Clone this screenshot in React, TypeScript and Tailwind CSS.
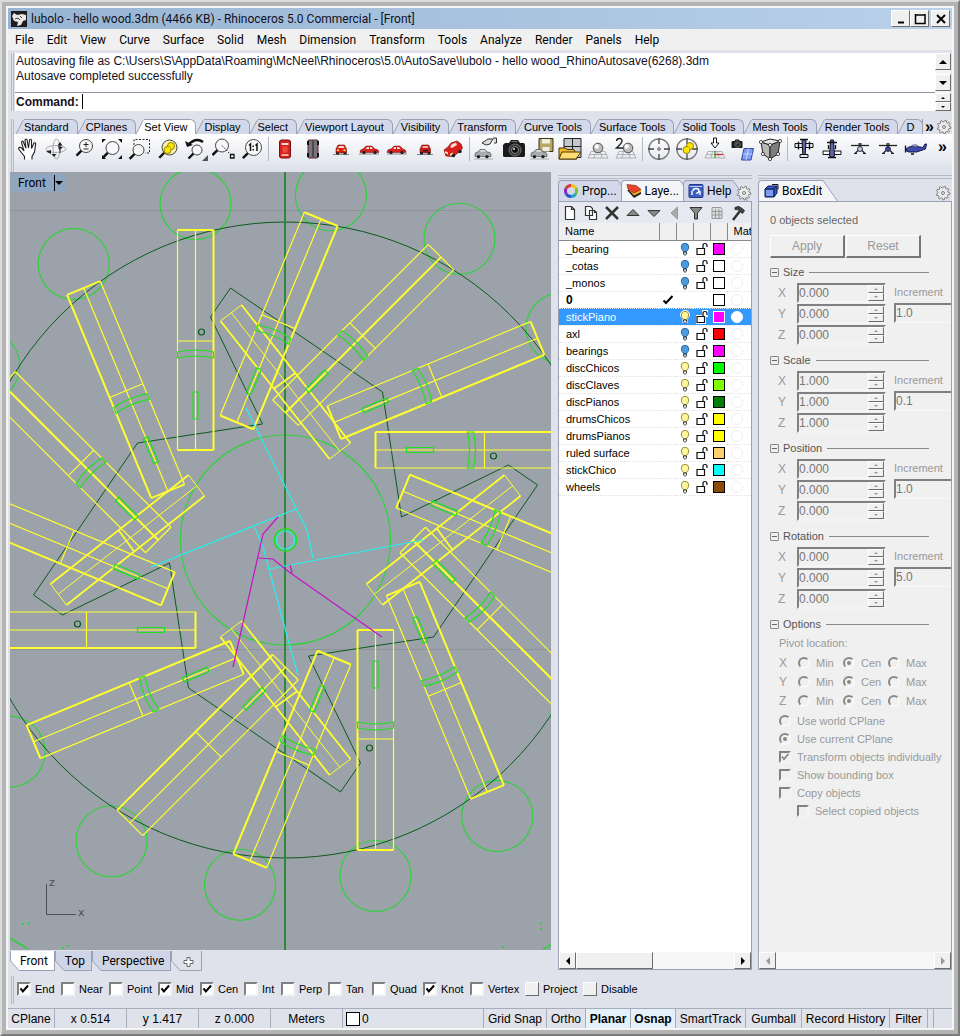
import React from 'react'
import clsx from 'clsx'

const sans = "font-['Liberation_Sans',Arial,sans-serif]"
const ui = "font-['Roboto','Noto_Sans',sans-serif]"

const raised = 'border border-t-white border-l-white border-r-[#6d6d6d] border-b-[#6d6d6d] bg-[#f0f0f0]'
const sunken = 'border-2 border-t-[#808080] border-l-[#808080] border-r-[#f4f4f4] border-b-[#f4f4f4]'

const menus = [
  'File', 'Edit', 'View', 'Curve', 'Surface', 'Solid', 'Mesh', 'Dimension',
  'Transform', 'Tools', 'Analyze', 'Render', 'Panels', 'Help',
]

const toolTabs = [
  'Standard', 'CPlanes', 'Set View', 'Display', 'Select', 'Viewport Layout', 'Visibility', 'Transform',
  'Curve Tools', 'Surface Tools', 'Solid Tools', 'Mesh Tools', 'Render Tools',
]

/* ---------- toolbar icons, all on a 24px grid ---------- */

const Lens = ({ cx, cy, r, fill = '#f8f8f8' }: { cx: number; cy: number; r: number; fill?: string }) => (
  <>
    <path d={`M${cx - r * 0.7} ${cy + r * 0.7}L${cx - r * 0.7 - 5} ${cy + r * 0.7 + 5}`} stroke="#111" strokeWidth="2.4" />
    <circle cx={cx} cy={cy} r={r} fill={fill} stroke="#444" strokeWidth="1" />
  </>
)

const YellowBalls = () => (
  <g fill="#ffe600" stroke="#776a00" strokeWidth=".8">
    <circle cx="15" cy="9" r="3.500" />
    <circle cx="11.500" cy="13" r="3.500" />
    <path d="M13 9.500l-1 3 3-.5z" stroke="none" />
  </g>
)

const CarSide = () => (
  <>
    <path d="M2 17h20" stroke="#888" />
    <path d="M3 15.500q-.5-3 3-3.500l3-3h6l3 3q4 0 4 3.500z" fill="#d8201c" stroke="#7a1010" strokeWidth=".5" />
    <path d="M8.500 12l1.500-2h2v2zM13 10h1.500l1.500 2h-3z" fill="#ffd9d0" />
    <circle cx="7" cy="15.500" r="1.700" fill="#222" />
    <circle cx="18" cy="15.500" r="1.700" fill="#222" />
  </>
)

const CarGrey = () => (
  <g transform="translate(0 1)">
    <path d="M1 16.500q0-2.500 3-2.500l2-2.500h5l2 2.500q4 0 4 2.500v2h-16z" fill="#a9aeae" stroke="#555" strokeWidth=".7" />
    <path d="M6 13.500l1-1.300h3.500l1 1.300z" fill="#f2f2f2" />
    <circle cx="4.500" cy="18.700" r="1.700" fill="#222" />
    <circle cx="13" cy="18.700" r="1.700" fill="#222" />
    <path d="M0 21h19" stroke="#aaa" />
  </g>
)

const Camera = ({ s = 1, x = 0, y = 0 }: { s?: number; x?: number; y?: number }) => (
  <g transform={`translate(${x} ${y}) scale(${s})`}>
    <path d="M1 8l2-2h4l2-3h7l2 3h4l1 2v11l-1 1H2l-1-1z" fill="#1b1b1b" />
    <path d="M9.500 4.500h6" stroke="#777" />
    <circle cx="13" cy="13" r="6" fill="#333" stroke="#888" strokeWidth=".8" />
    <circle cx="13" cy="13" r="3.500" fill="#0a0a0a" stroke="#aaa" strokeWidth=".8" />
    <circle cx="12" cy="12" r="1" fill="#eee" />
  </g>
)

const Mesh = () => (
  <g stroke="#9a9a9a" strokeWidth=".7" fill="none">
    <path d="M5 14.500h14M3.500 17.500h17M2 21h20M5 14.500L2 21M9.500 14.500l-1.500 6.500M14.500 14.500l1.500 6.500M19 14.500l3 6.500" />
  </g>
)

const Ball = ({ x, y }: { x: number; y: number }) => (
  <>
    <circle cx={x} cy={y} r="4.800" fill="#bcbcbc" stroke="#444" strokeWidth=".9" />
    <circle cx={x - 1.2} cy={y - 1.5} r="2.200" fill="#fff" />
  </>
)

const Target = () => (
  <g fill="none">
    <circle cx="12" cy="12" r="10.200" stroke="#777" strokeWidth="1.300" />
    <path d="M12 1v6M12 17v6M1 12h6M17 12h6" stroke="#444" strokeWidth="1.300" />
  </g>
)

const PlaneFar = ({ fill }: { fill: string }) => (
  <>
    <path d="M3 8.500h18" stroke="#222" strokeWidth="1.300" />
    <path d="M12 6v5M10 7h4M7 16.500l3-3M17 16.500l-3-3M6 16.500h3M15 16.500h3" stroke="#222" strokeWidth="1.200" />
    <circle cx="12" cy="12" r="2.400" fill={fill} stroke="#223" />
  </>
)

const tools: { label: string; art: React.ReactNode }[][] = [
  [
    {
      label: 'Pan',
      art: (
        <path
          d="M8.500 22.500v-3L3 12.500q-1-2 1-2.200 1.500.2 4 3.700L5.500 5.500q0-1.700 1.500-1.300l3 7L9 3q.8-1.800 2-.3l1.500 8.300L13.500 3q1-1.500 2 0v8.500L18 6q1.500-.8 1.700.7L18.500 15l-2.500 4.500v3"
          fill="#fff" stroke="#222" strokeWidth="1.100"
        />
      ),
    },
    {
      label: 'Rotate view',
      art: (
        <g fill="none" stroke="#aaa" strokeWidth="1">
          <ellipse cx="12" cy="12" rx="10" ry="3.500" />
          <ellipse cx="12.500" cy="12" rx="3.500" ry="10" />
          <path d="M16 5l-2.500 3.500h5zM10 20l2.500-3h-5z" fill="#222" stroke="none" />
          <path d="M2 14.500l5-1.500v4zM14 9l5 1.500-4 2.500z" fill="#222" stroke="none" />
          <path d="M16 8v8" stroke="#333" />
        </g>
      ),
    },
    {
      label: 'Zoom dynamic',
      art: (
        <>
          <Lens cx={14} cy={9} r={6.500} />
          <path d="M11.500 7.500h5M14 5v5M11.500 12h5" stroke="#222" />
        </>
      ),
    },
    {
      label: 'Zoom extents',
      art: (
        <>
          <Lens cx={12.500} cy={11} r={6.500} />
          <path d="M2 2h4l-4 4zM22 2h-4l4 4zM2 22h4l-4-4zM22 22h-4l4-4z" fill="#111" />
        </>
      ),
    },
    {
      label: 'Zoom window',
      art: (
        <>
          <path d="M6 8V2.500h15.500V16H17" fill="none" stroke="#222" strokeDasharray="2 1.500" />
          <Lens cx={10.500} cy={13} r={5.500} />
        </>
      ),
    },
    { label: 'Zoom selected', art: <><Lens cx={13.500} cy={10.500} r={7.500} fill="#f5f0b0" /><YellowBalls /></> },
    {
      label: 'Undo view change',
      art: (
        <>
          <path d="M4 8Q12 0 19 5" fill="none" stroke="#111" strokeWidth="2.500" />
          <path d="M1 4l2 6 6-2z" fill="#111" />
          <Lens cx={13} cy={13} r={5} />
          <path d="M24 18v6h-6z" fill="#555" />
        </>
      ),
    },
    {
      label: 'Zoom target',
      art: (
        <>
          <Lens cx={10} cy={8.500} r={6.500} />
          <path d="M10 8.500l8.500 9" stroke="#222" strokeDasharray="1.500 1.500" />
          <path d="M18.500 17.500h3.500v3.500h-3.500z" fill="#fff" stroke="#111" strokeWidth="1.300" />
        </>
      ),
    },
    {
      label: 'Zoom one to one',
      art: (
        <>
          <Lens cx={13.500} cy={10.500} r={8} />
          <path d="M9 8.500l1.500-1.500v7M15.500 8.500L17 7v7" fill="none" stroke="#111" strokeWidth="1.500" />
          <path d="M12.500 8.500h1.500v1.500h-1.500zM12.500 12h1.500v1.500h-1.500z" fill="#111" />
        </>
      ),
    },
  ],
  [
    {
      label: 'Top view',
      art: (
        <>
          <rect x="6.500" y="3" width="11" height="18" rx="2" fill="#d71f1f" stroke="#7a1010" />
          <path d="M8.500 6h7v2h-7z" fill="#ffd9d0" />
          <path d="M8.500 17h7v2h-7z" fill="#f6a9a0" />
          <path d="M9.500 9.500h5v6h-5z" fill="#ef4a42" />
        </>
      ),
    },
    {
      label: 'Bottom view',
      art: (
        <>
          <rect x="7" y="3" width="10" height="18" rx="1" fill="#77747c" stroke="#5d2626" />
          <path d="M12 4v16" stroke="#333" strokeWidth="1.300" />
          <path d="M7 4v4M17 4v4M7 16v4M17 16v4" stroke="#111" strokeWidth="2" />
        </>
      ),
    },
    {
      label: 'Front view',
      art: (
        <>
          <path d="M4 17.500h16" stroke="#888" />
          <path d="M7 16v-4l2-4h6.500l2 4v4z" fill="#d8201c" stroke="#7a1010" strokeWidth=".6" />
          <path d="M9 11l1-2h4.500l1 2z" fill="#ffd9d0" />
          <path d="M8 12.500h2v1.500H8zM14.500 12.500h2v1.500h-2z" fill="#ffe14a" />
          <path d="M7 15.500h3v2H7zM14.500 15.500h3v2h-3z" fill="#222" />
        </>
      ),
    },
    { label: 'Right view', art: <CarSide /> },
    { label: 'Left view', art: <g transform="translate(24 0) scale(-1 1)"><CarSide /></g> },
    {
      label: 'Back view',
      art: (
        <>
          <path d="M4 17.500h16" stroke="#888" />
          <path d="M7 16v-4l2-4h6.500l2 4v4z" fill="#c41a1a" stroke="#7a1010" strokeWidth=".6" />
          <path d="M9 11l1-2h4.500l1 2z" fill="#f3b3a8" />
          <path d="M7 15h3v2.500H7zM14.500 15h3v2.500h-3zM10 13h5v1.500h-5z" fill="#222" />
        </>
      ),
    },
    {
      label: 'Perspective view',
      art: (
        <>
          <path d="M3 13l4-3 3-4 6-2 4 3 1.500 4-3 4-7 4.500L5 19z" fill="#d8201c" stroke="#7a1010" strokeWidth=".7" />
          <path d="M9 10l2-3 4-1.500 1 2.500-5 3z" fill="#ffd9d0" />
          <path d="M4 14l3 1.500v2L4 16zM9 17l3-1.500v2L9 19z" fill="#ffe9b0" />
          <circle cx="12.500" cy="18.500" r="1.800" fill="#222" />
          <circle cx="19" cy="14.500" r="1.800" fill="#222" />
        </>
      ),
    },
  ],
  [
    {
      label: 'Named views',
      art: (
        <>
          <CarGrey />
          <path d="M8 6l6-4h5l-3 5-4 1zM19 1h3.500v5H20" fill="#ddd" stroke="#333" />
        </>
      ),
    },
    { label: 'Capture view', art: <Camera /> },
    {
      label: 'Save view',
      art: (
        <>
          <path d="M9 1.500h14v13H9z" fill="#b5a964" stroke="#3a3515" />
          <path d="M12 2h8v4.500h-8zM12.500 10h7v4.500h-7z" fill="#efefe6" />
          <CarGrey />
        </>
      ),
    },
    {
      label: 'Viewport layout',
      art: (
        <>
          <path d="M6 1.500h17v19H6z" fill="#c4c8cc" stroke="#222" />
          <path d="M14.500 1.500v12M6 9.500h17" stroke="#222" />
          <path d="M1 11h6l2 1.500h7L19 22H1z" fill="#f3b62c" stroke="#4d3800" />
          <path d="M4 15h19l-5 7H1z" fill="#ffdd75" stroke="#4d3800" />
        </>
      ),
    },
    { label: 'Place camera', art: <><Mesh /><Ball x={12} y={11} /></> },
    {
      label: 'Two point perspective',
      art: (
        <>
          <Mesh />
          <Ball x={14} y={11} />
          <path d="M2.500 4q.3-2.500 3-2.500T8 4q0 2-5.500 7H9" fill="none" stroke="#222" strokeWidth="1.400" />
        </>
      ),
    },
  ],
  [
    { label: 'Set target', art: <><Target /><circle cx="12" cy="12" r="1.300" fill="none" stroke="#555" /></> },
    { label: 'Target selected', art: <><Target /><YellowBalls /></> },
    {
      label: 'Plan view',
      art: (
        <>
          <Mesh />
          <path d="M12 21v-7" stroke="#2d9a2d" strokeWidth="1.300" />
          <path d="M12 17.500h8" stroke="#c33" strokeWidth="1.300" />
          <path d="M10.500 1h3v5h2.500l-4 5-4-5h2.500z" fill="#fff" stroke="#111" />
        </>
      ),
    },
    {
      label: 'Camera to plane',
      art: (
        <>
          <Camera s={0.5} x={0} y={1} />
          <path d="M13 11.500h9.500L20 23h-9.500z" fill="#7f9cf5" stroke="#2d47a3" />
          <path d="M17.500 11.500L15 23M12 17h9.500" stroke="#dfe6ff" strokeWidth=".8" />
        </>
      ),
    },
    {
      label: 'Edit cage view',
      art: (
        <>
          <path d="M2 5l9 3v14l-7-5z" fill="#b9b9b9" stroke="#222" />
          <path d="M11 8l10-4-2 13-8 5z" fill="#7d7d7d" stroke="#222" />
          <path d="M2 5l9-3 10 2-10 4z" fill="#e6e6e6" stroke="#222" />
          {[[2, 5], [11, 8], [21, 4], [4, 17], [11, 22], [19, 17]].map(([x, y]) => (
            <circle key={`${x}-${y}`} cx={x} cy={y} r="1.600" fill="#fff" stroke="#222" strokeWidth=".8" />
          ))}
        </>
      ),
    },
  ],
  [
    {
      label: 'Plane top',
      art: (
        <>
          <path d="M3 6.500h18v4H3z" fill="#e4e5f2" stroke="#111" />
          <path d="M10 3.500q2-2 4 0l-1 17h-2z" fill="#5d63ad" stroke="#111" />
          <path d="M8 17.500h8v3H8z" fill="#e4e5f2" stroke="#111" />
          <path d="M8 2.500h8M6.500 4.500v8M17.500 4.500v8" stroke="#111" strokeWidth="1.300" />
        </>
      ),
    },
    {
      label: 'Plane bottom',
      art: (
        <>
          <path d="M3 14h18v3.500H3z" fill="#fff" stroke="#111" />
          <path d="M10.500 3h3l1 16q-2.500 3-5 0z" fill="#5d63ad" stroke="#111" />
          <path d="M7 5.500h10M8.500 8v4M15.500 8v4M8 20.500h8" stroke="#111" strokeWidth="1.300" />
        </>
      ),
    },
    { label: 'Plane front', art: <PlaneFar fill="#cfd3e6" /> },
    { label: 'Plane back', art: <PlaneFar fill="#3c48b0" /> },
    {
      label: 'Plane side',
      art: (
        <>
          <path d="M2 12q2-2.500 6-2.500h5l6 1 2-3.500h1.500l-1 5-9 3H5q-3 0-3-3z" fill="#3f4cae" stroke="#15184a" />
          <path d="M7 9.500l2-1.500h4l1 2z" fill="#dfe4ff" stroke="#15184a" strokeWidth=".7" />
          <path d="M1.500 8.500v7M7 17h3" stroke="#111" strokeWidth="1.300" />
        </>
      ),
    },
  ],
]

/* ---------- small shared pieces ---------- */

const gearPath = Array.from({ length: 36 }, (_, i) => {
  const a = (i / 36) * Math.PI * 2
  const r = i % 4 < 2 ? 6.9 : 5.1
  return `${i ? 'L' : 'M'}${(8 + r * Math.cos(a)).toFixed(2)} ${(8 + r * Math.sin(a)).toFixed(2)}`
}).join('')

const Gear = () => (
  <button aria-label="Options" className="block shrink-0">
    <svg width="16" height="16" viewBox="0 0 16 16" fill="#ececec" stroke="#7c7c7c" strokeLinejoin="round">
      <path d={`${gearPath}Z`} />
      <circle cx="8" cy="8" r="1.500" />
    </svg>
  </button>
)

const Grip = () => <div className="h-1 shrink-0 border-y border-[#b5bac8]" />

const Arrow = ({ dir, size = 8, color = '#000' }: { dir: 'up' | 'down' | 'left' | 'right'; size?: number; color?: string }) => (
  <svg width={size} height={size} viewBox="0 0 8 8" fill={color}>
    {dir === 'up' && <path d="M4 2l4 4H0z" />}
    {dir === 'down' && <path d="M4 6l4-4H0z" />}
    {dir === 'left' && <path d="M2 4l4-4v8z" />}
    {dir === 'right' && <path d="M6 4L2 0v8z" />}
  </svg>
)

const ScrollBtn = ({ dir, label, className, size, color }: {
  dir: 'up' | 'down' | 'left' | 'right'
  label: string
  className: string
  size?: number
  color?: string
}) => (
  <button aria-label={label} className={clsx('flex items-center justify-center', raised, className)}>
    <Arrow dir={dir} size={size} color={color} />
  </button>
)

/* ---------- drawing ---------- */

// bold: which edges of the stick come out heavy (L/C/R long edges, T/B ends)
const sticks: { angle: number; bold: string; band: boolean }[] = [
  { angle: 0, bold: 'RTB', band: true },
  { angle: 22.5, bold: 'RTB', band: true },
  { angle: 45, bold: 'C', band: true },
  { angle: 67.5, bold: 'RTB', band: true },
  { angle: 90, bold: 'LB', band: true },
  { angle: 112.5, bold: 'LB', band: true },
  { angle: 135, bold: 'C', band: true },
  { angle: 157.5, bold: 'LTB', band: true },
  { angle: 180, bold: 'RTB', band: true },
  { angle: 202.5, bold: 'RTB', band: true },
  { angle: 225, bold: 'R', band: false },
  { angle: 247.5, bold: 'RTB', band: true },
  { angle: 270, bold: 'LB', band: false },
  { angle: 292.5, bold: 'LB', band: false },
  { angle: 315, bold: 'C', band: true },
  { angle: 337.5, bold: 'LTB', band: true },
]

const edges: Record<string, string> = {
  L: 'M-108 -310V-90',
  C: 'M-90 -310V-90',
  R: 'M-72 -310V-90',
  T: 'M-108 -310H-72',
  B: 'M-108 -90H-72',
}

const quarters = [0, 90, 180, 270]

const Drawing = () => (
  <svg
    viewBox="10 172 541 778"
    preserveAspectRatio="xMidYMid slice"
    className="block h-full w-full"
    fill="none"
    role="img"
    aria-label="Front viewport"
  >
    <path d="M0 210.500H960M0 649.500H960" stroke="#8c939a" />
    <g transform="translate(285.500 540)">
      {sticks.map(({ angle }) => (
        <circle key={angle} cx="-90" cy="-336" r="35.500" stroke="#2fd23a" strokeWidth="1.200" transform={`rotate(${angle})`} />
      ))}
      <circle r="105" stroke="#2fd23a" strokeWidth="1.200" />
      <g stroke="#0c5a1c">
        <circle r="318" />
        <path d="M-55 -252L-75 -223L-23 -116L-148 -97L-252 55L-223 75L-116 23L-97 148L55 252L75 223L23 116L148 97L252 -55L223 -75L116 -23L97 -148Z" />
      </g>
      <path d="M-.5 -380V420" stroke="#2c8a3a" strokeWidth="2" />
      {quarters.map((angle) => (
        <g key={angle} transform={`rotate(${angle})`}>
          <circle cx="-84" cy="-208" r="3" stroke="#0c5a1c" strokeWidth="1.200" />
          <g stroke="#ffff2e">
            <path d="M-44 -235L65 -97M-65 -219L44 -81M-12 -151L10 -167" strokeWidth="1.800" />
            <path d="M-65 -219L-44 -235M44 -81L65 -97M-54 -227L54 -89" />
          </g>
        </g>
      ))}
      {sticks.map(({ angle, bold, band }) => (
        <g key={angle} transform={`rotate(${angle})`}>
          <g stroke="#ffff2e">
            {Object.entries(edges).map(([name, d]) => (
              <path key={name} d={d} strokeWidth={bold.includes(name) ? 2 : 1.2} />
            ))}
            <path d="M-108 -199H-72" strokeWidth="1.200" />
          </g>
          <g stroke="#22e01e" strokeWidth="1.200">
            {band && <path d="M-108 -188Q-90 -192 -72 -188V-182Q-90 -186 -108 -182Z" />}
            <path d="M-92.500 -148h5v27h-5z" />
          </g>
        </g>
      ))}
      <circle r="11" stroke="#22e01e" strokeWidth="1.500" />
      <circle r="9" stroke="#25f0ea" strokeWidth="1.200" />
    </g>
    <g stroke="#25f0ea" strokeWidth="1.200">
      <path d="M246 408L296 508L307 530L313 558" />
      <path d="M151 567L296 509" />
      <path d="M255 528L263 547L269 569L289 643L298 675" />
      <path d="M269 569L423 540" />
    </g>
    <g stroke="#c414c8" strokeWidth="1.200">
      <path d="M278 517L263 534L233 667" />
      <path d="M258 558L273 559L289 572L382 637M290 565L292 573" />
    </g>
    <g fill="#2fd23a">
      <path d="M22 923h2v2h-2zM28 922h2v2h-2zM62 947h2v2h-2zM67 945h2v2h-2zM540 922h2v2h-2zM540 928h2v2h-2zM502 946h2v2h-2z" />
      <path d="M10 938l18 11M543 949l8-4" stroke="#2fd23a" strokeWidth="1.500" />
    </g>
    <path d="M46.500 884V914.500H76" stroke="#4a5056" />
    <g fill="#4a5056" className="font-['DejaVu_Sans',sans-serif] text-[11px]">
      <text x="49" y="886">z</text>
      <text x="78" y="916">x</text>
    </g>
  </svg>
)

const Viewport = () => (
  <section className="mr-[7px] ml-0.5 flex min-w-0 flex-1 flex-col">
    <div className="relative min-h-0 flex-1 overflow-hidden bg-[#9ba2aa]">
      <Drawing />
      <button className={clsx('absolute top-0.5 left-0.5 flex h-[18px] items-center bg-[#8fa6c3] pr-0.5 pl-1.5 text-[12px] text-black', ui)}>
        Front
        <span className="ml-2 flex h-4 items-center border-l border-black">
          <Arrow dir="down" />
        </span>
      </button>
    </div>
    <div className={clsx('flex h-[22px] shrink-0 items-start pt-px text-[12px] leading-5', ui)}>
      {['Front', 'Top', 'Perspective'].map((name, i) => (
        <button key={name} className="flex h-5">
          <svg width="10" height="20" viewBox="0 0 10 20">
            <path d="M.5 0v10L9 19.500h1V0z" fill={i === 0 ? '#fff' : '#cfd5e6'} />
            <path d="M.5 0v10L9 19.500h1" fill="none" stroke="#9aa1b4" />
          </svg>
          <span className={clsx('h-5 border-r border-b border-[#9aa1b4] pr-1.5', i === 0 ? 'bg-white' : 'bg-[#cfd5e6]')}>{name}</span>
        </button>
      ))}
      <button aria-label="New viewport" className="flex h-5">
        <svg width="31" height="20" viewBox="0 0 31 20" fill="none" stroke="#9aa1b4">
          <path d="M.5 0v10L9 19.500h21.500V0" />
          <path d="M16 6.500h3v3h3v3h-3v3h-3v-3h-3v-3h3z" fill="#fff" stroke="#666" />
        </svg>
      </button>
    </div>
  </section>
)

/* ---------- layers panel ---------- */

type Layer = { name: string; color: string; state: 'on' | 'off' | 'current' | 'selected' }

const layers: Layer[] = [
  { name: '_bearing', color: '#ff00ff', state: 'off' },
  { name: '_cotas', color: '#ffffff', state: 'off' },
  { name: '_monos', color: '#ffffff', state: 'off' },
  { name: '0', color: '#ffffff', state: 'current' },
  { name: 'stickPiano', color: '#ff00ff', state: 'selected' },
  { name: 'axl', color: '#ff0000', state: 'off' },
  { name: 'bearings', color: '#ff00ff', state: 'off' },
  { name: 'discChicos', color: '#00ff00', state: 'on' },
  { name: 'discClaves', color: '#7fff00', state: 'on' },
  { name: 'discPianos', color: '#007f00', state: 'on' },
  { name: 'drumsChicos', color: '#ffff00', state: 'on' },
  { name: 'drumsPianos', color: '#ffff00', state: 'on' },
  { name: 'ruled surface', color: '#ffcf70', state: 'on' },
  { name: 'stickChico', color: '#00ffff', state: 'on' },
  { name: 'wheels', color: '#8a4b08', state: 'on' },
]

const Bulb = ({ lit, halo }: { lit: boolean; halo?: boolean }) => (
  <svg width="12" height="14" viewBox="0 0 12 14" className="mx-auto block">
    {halo && <path d="M1 5a5 5 0 0 1 10 0q0 2-2.500 4v4h-5V9Q1 7 1 5z" fill="#fff" />}
    <path
      d="M4.500 9.500Q2.300 7.500 2.300 5a3.700 3.700 0 0 1 7.400 0q0 2.500-2.200 4.500z"
      fill={lit ? '#fff79a' : '#4b9be0'} stroke={lit ? '#8d8435' : '#1f5d96'} strokeWidth=".9"
    />
    <path d="M4.500 10h3v2l-1.500 1.500L4.500 12z" fill={lit ? '#eee' : '#b7d3ee'} stroke="#222" strokeWidth=".8" />
  </svg>
)

const Padlock = ({ halo }: { halo?: boolean }) => (
  <svg width="12" height="14" viewBox="0 0 12 14" className="mx-auto block">
    {halo && <path d="M0 5h6V0h6v7h-2v7H0z" fill="#fff" />}
    <path d="M1 6.500h7.500v6H1z" fill="#fff" stroke="#111" strokeWidth="1.200" />
    <path d="M7 6V3.500Q7 1.500 9 1.500t2 2V5" fill="none" stroke="#111" strokeWidth="1.200" />
  </svg>
)

const panelIcons: { label: string; art: React.ReactNode }[] = [
  { label: 'New layer', art: <path d="M3.500 1.500h6l3 3v10h-9zM9.500 1.500v3h3" fill="#fff" strokeWidth="1.200" /> },
  {
    label: 'New sublayer',
    art: <path d="M2.500 1.500h5l2 2v7h-7zM6.500 5.500h5l2 2v7h-7zM11.500 5.500v2h2" fill="#fff" strokeWidth="1.200" />,
  },
  { label: 'Delete', art: <path d="M2 2l12 12M14 2L2 14" strokeWidth="2.500" /> },
  { label: 'Move up', art: <path d="M8 4.500l6 6H2z" fill="#888" /> },
  { label: 'Move down', art: <path d="M8 11.500l6-6H2z" fill="#888" /> },
  { label: 'Move out', art: <path d="M10.500 2v12L4 8z" fill="#aaa" stroke="#999" /> },
  { label: 'Filter', art: <path d="M2 2.500h12L9.500 8v6h-3V8z" fill="#888" /> },
  { label: 'Columns', art: <path d="M3 2.500h9l1 2v9H3zM3 6.500h10M3 10h10M6.500 4v9.500M10 4v9.500" stroke="#999" fill="#ddd" /> },
  {
    label: 'Tools',
    art: (
      <>
        <path d="M3 15l7-9" strokeWidth="2.500" />
        <path d="M5 2.500q4-2.500 7 1l2.500 2-2 3-2.500-2Q9 4 5 4.500z" fill="#444" />
      </>
    ),
  },
]

const PanelTab = ({ label, icon, active }: { label: string; icon: React.ReactNode; active?: boolean }) => (
  <button className="-mr-3 flex h-[21px] shrink-0">
    <span
      className={clsx(
        'flex h-[21px] items-center gap-[3px] rounded-tl-sm border-t border-l border-[#9aa1b4] pl-1',
        active ? 'bg-[#f4f5f8]' : 'bg-[#d3d9ea]',
      )}
    >
      <svg width="16" height="16" viewBox="0 0 16 16">{icon}</svg>
      {label}
    </span>
    <svg width="16" height="21" viewBox="0 0 16 21">
      <path d="M0 .5h1L15.500 21H0z" fill={active ? '#f4f5f8' : '#d3d9ea'} />
      <path d="M0 .5h1L15.500 21" fill="none" stroke="#9aa1b4" />
    </svg>
  </button>
)

const LayersPanel = () => (
  <section className="mb-0.5 flex w-[194px] shrink-0 flex-col pt-[3px]">
    <Grip />
    <div className={clsx('flex h-[22px] shrink-0 items-end text-[12px]', ui)}>
      <PanelTab
        label="Prop..."
        icon={
          <g fill="none" strokeWidth="3">
            <path d="M8 2.500A5.500 5.500 0 0 1 12.800 5.300" stroke="#f3c21c" />
            <path d="M12.800 5.300A5.500 5.500 0 0 1 12.800 10.700" stroke="#7ac52c" />
            <path d="M12.800 10.700A5.500 5.500 0 0 1 8 13.500" stroke="#24a7b8" />
            <path d="M8 13.500A5.500 5.500 0 0 1 3.200 10.700" stroke="#2456c8" />
            <path d="M3.200 10.700A5.500 5.500 0 0 1 3.200 5.300" stroke="#8b2bbb" />
            <path d="M3.200 5.300A5.500 5.500 0 0 1 8 2.500" stroke="#e0342c" />
          </g>
        }
      />
      <PanelTab
        active
        label="Laye..."
        icon={
          <>
            <path d="M1 7l7 8 7-4V7z" fill="#222" />
            <path d="M1 5l7 7.500 7-3.500V6z" fill="#f0b429" />
            <path d="M1 1.500l9 1 5 4-7 3.500-6-4z" fill="#e8442c" stroke="#7a1a10" strokeWidth=".6" />
          </>
        }
      />
      <PanelTab
        label="Help"
        icon={
          <>
            <rect x="1" y="1.500" width="14" height="13" rx="1" fill="#3d5fc4" stroke="#22397e" />
            <path d="M1.500 3.500h13" stroke="#b8c8f5" />
            <path d="M5 8q0-2.500 3-2.500T11 8q0 1.500-2 2v1M4 12V8M12 12V8" fill="none" stroke="#fff" strokeWidth="1.400" />
          </>
        }
      />
      <span className="mr-px ml-auto"><Gear /></span>
    </div>
    <div className="flex min-h-0 flex-1 flex-col overflow-hidden border border-[#9aa1b4] bg-white">
      <div className="flex h-[21px] shrink-0 items-center bg-[#e6e9f0]">
        {panelIcons.map(({ label, art }) => (
          <button key={label} aria-label={label} className="flex w-[21px] justify-center">
            <svg width="16" height="16" viewBox="0 0 16 16" fill="none" stroke="#333">{art}</svg>
          </button>
        ))}
      </div>
      <table className="w-full table-fixed border-collapse text-[11px] leading-4">
        <colgroup>
          <col />
          <col className="w-[17px]" />
          <col className="w-[17px]" />
          <col className="w-[17px]" />
          <col className="w-[17px]" />
          <col className="w-6" />
        </colgroup>
        <thead>
          <tr className="h-[17px] bg-[#f0f0f0] text-left">
            {['Name', '', '', '', '', 'Mat'].map((title, i) => (
              <th
                key={i}
                className={clsx(
                  'overflow-hidden border-b border-[#8a8a8a] p-0 font-normal',
                  i < 5 && 'border-r',
                  i === 5 ? 'pl-1.5' : 'pl-[6px]',
                )}
              >
                {title}
              </th>
            ))}
          </tr>
        </thead>
        <tbody>
          {layers.map(({ name, color, state }) => {
            const selected = state === 'selected'
            return (
              <tr
                key={name}
                className={clsx('h-[17px] border-b border-dotted border-[#e2e2e2]', selected && 'bg-[#3399ff] text-white')}
              >
                <td className={clsx('p-0 pl-[7px] leading-4', state === 'current' && 'text-[12px] font-bold')}>{name}</td>
                <td className="p-0">
                  {state === 'current' && (
                    <svg width="12" height="12" viewBox="0 0 12 12" className="mx-auto block">
                      <path d="M1.500 6.500L4 9l6.500-7" fill="none" stroke="#000" strokeWidth="2" />
                    </svg>
                  )}
                </td>
                <td className="p-0">{state !== 'current' && <Bulb lit={state !== 'off'} halo={selected} />}</td>
                <td className="p-0">{state !== 'current' && <Padlock halo={selected} />}</td>
                <td className="p-0">
                  <span
                    className={clsx('mx-auto block size-3 border', selected ? 'border-white' : 'border-black')}
                    style={{ backgroundColor: color }}
                  />
                </td>
                <td className="p-0">
                  <span className={clsx('ml-1 block size-3 rounded-full border', selected ? 'border-white bg-white' : 'border-[#efefef]')} />
                </td>
              </tr>
            )
          })}
        </tbody>
      </table>
      <div className="mt-auto flex h-[17px] shrink-0 bg-[#f7f7f7]">
        <ScrollBtn dir="left" label="Scroll left" className="w-[17px]" />
        <div className={clsx('w-[77px]', raised)} />
        <ScrollBtn dir="right" label="Scroll right" className="ml-auto w-[17px]" />
      </div>
    </div>
  </section>
)

/* ---------- box edit panel ---------- */

const SectionTitle = ({ title }: { title: string }) => (
  <h3 className="flex h-4 items-center gap-1 pr-[22px] text-[#555]">
    <span className="flex size-[9px] items-center justify-center rounded-[1px] border border-[#888]">
      <span className="h-px w-[5px] bg-[#666]" />
    </span>
    {title}
    <span className="ml-px h-px flex-1 bg-[#8a8a8a]" />
  </h3>
)

const ValueSection = ({ title, value, step }: { title: string; value: string; step: string }) => (
  <div className="h-[88px]">
    <SectionTitle title={title} />
    <div className="flex pt-0.5">
      <div className="w-[116px] shrink-0">
        {['X', 'Y', 'Z'].map((axis) => (
          <label key={axis} className="flex h-[21px] items-center pl-2 text-[#999]">
            <span className="w-[19px] text-[12px]">{axis}</span>
            <span className={clsx('flex h-5 w-[89px]', sunken)}>
              <input
                disabled
                defaultValue={value}
                aria-label={`${title} ${axis}`}
                className="min-w-0 flex-1 bg-transparent text-[12px] text-[#777]"
              />
              <span className="flex w-4 flex-col">
                <ScrollBtn dir="up" label={`${title} ${axis} up`} size={4} color="#999" className="h-2 flex-1" />
                <ScrollBtn dir="down" label={`${title} ${axis} down`} size={4} color="#999" className="h-2 flex-1" />
              </span>
            </span>
          </label>
        ))}
      </div>
      <label className="ml-2 w-16 shrink-0 text-[#999]">
        <span className="block h-[21px] leading-[21px]">Increment</span>
        <input disabled defaultValue={step} className={clsx('h-5 w-16 bg-transparent text-[12px] text-[#777]', sunken)} />
      </label>
    </div>
  </div>
)

const Radio = ({ name, label, checked }: { name: string; label: string; checked?: boolean }) => (
  <label className="flex items-center gap-1.5">
    <span className="relative flex size-3">
      <input
        type="radio"
        name={name}
        defaultChecked={checked}
        disabled
        className="peer size-3 appearance-none rounded-full border-2 border-t-[#888] border-r-[#f8f8f8] border-b-[#f8f8f8] border-l-[#888]"
      />
      <span className="pointer-events-none absolute inset-1 hidden rounded-full bg-[#888] peer-checked:block" />
    </span>
    {label}
  </label>
)

const Check = ({ label, checked, disabled, pushed, gap }: {
  label: string
  checked?: boolean
  disabled?: boolean
  pushed?: boolean
  gap: string
}) => (
  <label className={clsx('flex items-center whitespace-nowrap', gap)}>
    <span className="relative flex shrink-0">
      <input
        type="checkbox"
        defaultChecked={checked}
        disabled={disabled}
        className={clsx(
          'peer appearance-none',
          disabled ? 'size-3' : 'size-[14px]',
          pushed ? raised : sunken,
          !pushed && !disabled && 'bg-white',
        )}
      />
      <svg viewBox="0 0 12 12" className="pointer-events-none absolute inset-0 hidden h-full w-full peer-checked:block">
        <path d="M3 5.500L5 8l4.500-5" fill="none" stroke={disabled ? '#888' : '#000'} strokeWidth="1.800" />
      </svg>
    </span>
    {label}
  </label>
)

const BoxEditPanel = () => (
  <section className="mb-0.5 flex w-[194px] shrink-0 flex-col pt-[3px]">
    <Grip />
    <div className={clsx('flex h-[22px] shrink-0 items-end text-[12px]', ui)}>
      <PanelTab
        active
        label="BoxEdit"
        icon={
          <>
            <path d="M2 6l3-3h9v7l-3 4H2z" fill="#3557c9" stroke="#111c4a" />
            <path d="M2 6h9l3-3M11 6v8" fill="none" stroke="#111c4a" />
            <path d="M3 7h7v6H3z" fill="#7f9cf0" />
            <path d="M9 1.500h6v5" fill="none" stroke="#111" />
          </>
        }
      />
      <span className="mr-px ml-auto"><Gear /></span>
    </div>
    <div className="flex min-h-0 flex-1 flex-col overflow-hidden border border-[#9aa1b4] bg-[#f0f0f0]">
      <div className="pt-2.5 pl-[11px] text-[11px] leading-4">
        <p className="text-[#666]">0 objects selected</p>
        <div className="mt-[7px] mb-1.5 flex gap-px text-[12px] text-[#999]">
          {['Apply', 'Reset'].map((name) => (
            <button key={name} disabled className="h-[23px] w-[75px] border border-t-white border-r-2 border-b-2 border-l-white border-r-[#777] border-b-[#777]">
              {name}
            </button>
          ))}
        </div>
        <ValueSection title="Size" value="0.000" step="1.0" />
        <ValueSection title="Scale" value="1.000" step="0.1" />
        <ValueSection title="Position" value="0.000" step="1.0" />
        <ValueSection title="Rotation" value="0.000" step="5.0" />
        <SectionTitle title="Options" />
        <div className="pl-[9px] text-[#999]">
          <p className="pt-[3px] pb-0.5">Pivot location:</p>
          {['X', 'Y', 'Z'].map((axis) => (
            <div key={axis} className="grid h-[19px] grid-cols-[19px_45px_45px_45px] items-center">
              <span className="text-[12px]">{axis}</span>
              <Radio name={`pivot-${axis}`} label="Min" />
              <Radio name={`pivot-${axis}`} label="Cen" checked />
              <Radio name={`pivot-${axis}`} label="Max" />
            </div>
          ))}
          <div className="flex flex-col gap-0.5 pt-[3px]">
            <Radio name="cplane" label="Use world CPlane" />
            <Radio name="cplane" label="Use current CPlane" checked />
            <Check label="Transform objects individually" checked disabled gap="gap-1.5" />
            <Check label="Show bounding box" disabled gap="gap-1.5" />
            <Check label="Copy objects" disabled gap="gap-1.5" />
            <div className="pl-[18px]">
              <Check label="Select copied objects" disabled gap="gap-1.5" />
            </div>
          </div>
        </div>
      </div>
      <div className="mt-auto flex h-[17px] shrink-0 bg-[#f7f7f7]">
        <ScrollBtn dir="left" label="Scroll left" className="w-[17px]" color="#999" />
        <ScrollBtn dir="right" label="Scroll right" className="ml-auto w-[17px]" color="#999" />
      </div>
    </div>
  </section>
)

/* ---------- window chrome ---------- */

const TitleBar = () => (
  <header className={clsx('flex h-[21px] shrink-0 items-center bg-gradient-to-r from-[#98b4d4] to-[#b9d1ea] pr-0.5 pl-[3px]', ui)}>
    <svg width="16" height="16" viewBox="0 0 16 16">
      <path d="M0 0h16v16H0z" fill="#1d1d1d" />
      <path d="M1 5l2-3 3 2 5-1 4 1v5l-3 1-2 4-4 1 1-4-4-1z" fill="#e8e8e8" />
      <path d="M4 8l3-1 2 2M9 5l2 2" stroke="#444" fill="none" />
    </svg>
    <h1 className="ml-1 flex-1 truncate text-[12px] text-[#10101c]">
      lubolo - hello wood.3dm (4466 KB) - Rhinoceros 5.0 Commercial - [Front]
    </h1>
    <div className="flex">
      {[
        { label: 'Minimize', d: 'M4 10.500h6', w: 2 },
        { label: 'Maximize', d: 'M2.500 2v9.500h9.500V2M2 3h10.500', w: 1.5 },
        { label: 'Close', d: 'M3 3l8 8M11 3l-8 8', w: 2 },
      ].map(({ label, d, w }) => (
        <button key={label} aria-label={label} className={clsx('flex h-[17px] w-[19px] items-center justify-center last:ml-0.5', raised)}>
          <svg width="14" height="14" viewBox="0 0 14 14">
            <path d={d} fill="none" stroke="#000" strokeWidth={w} />
          </svg>
        </button>
      ))}
    </div>
  </header>
)

const CommandArea = () => (
  <div className="mt-[3px] flex h-[58px] shrink-0 pr-px pl-[3px] text-[12px] text-[#15101c]">
    <div className="mr-px w-[3px] border-x border-[#b5bac8]" />
    <div className="flex min-w-0 flex-1 flex-col bg-white">
      <div className="h-10 border-b border-[#8d939f] pt-px pl-px leading-[15px]">
        <p className="truncate">
          Autosaving file as C:\Users\S\AppData\Roaming\McNeel\Rhinoceros\5.0\AutoSave\lubolo - hello wood_RhinoAutosave(6268).3dm
        </p>
        <p>Autosave completed successfully</p>
      </div>
      <label className="flex h-[17px] items-center pl-px">
        <b>Command:</b>
        <span className="ml-[3px] h-[15px] w-px bg-black" />
        <input className="min-w-0 flex-1 bg-transparent outline-none" />
      </label>
    </div>
    <div className="flex w-4 flex-col bg-[#f4f4f4]">
      <ScrollBtn dir="up" label="Scroll up" className="h-[17px]" />
      <ScrollBtn dir="down" label="Scroll down" className="mt-auto h-[17px]" />
      <ScrollBtn dir="up" label="Previous" size={4} className="mt-0.5 h-[9px]" />
      <ScrollBtn dir="down" label="Next" size={4} className="h-[9px]" />
    </div>
  </div>
)

const ToolTab = ({ name, active }: { name: string; active: boolean }) => (
  <button className="flex h-[15px] shrink-0">
    <svg width="9" height="15" viewBox="0 0 9 15" className="-mr-px">
      <path d="M0 15L8 .5h1V15z" fill={active ? '#fff' : '#d3d9ea'} />
      <path d="M0 15L7 1.500Q7.500.5 9 .5" fill="none" stroke="#9aa1b4" />
    </svg>
    <span
      className={clsx(
        'h-[15px] rounded-tr-md border-t border-r border-[#9aa1b4] pr-2 leading-[14px]',
        active ? 'bg-white' : 'bg-[#d3d9ea]',
      )}
    >
      {name}
    </span>
  </button>
)

const Toolbars = () => (
  <div className="mt-2 flex h-[53px] shrink-0 pl-[3px] text-[11px]">
    <div className="w-[3px] shrink-0 border-x border-[#b5bac8]" />
    <div className="flex min-w-0 flex-1 flex-col">
      <div className="flex h-[15px] pl-0.5">
        <div className="flex min-w-0 flex-1 overflow-hidden">
          {toolTabs.map((name) => (
            <ToolTab key={name} name={name} active={name === 'Set View'} />
          ))}
          <ToolTab name="D" active={false} />
        </div>
        <button className="w-[14px] shrink-0 border-l border-[#9aa1b4] text-[16px] leading-3 font-bold">»</button>
        <Gear />
      </div>
      <div className="flex h-[36px] items-start bg-gradient-to-b from-white to-[#dde1ea] pt-[3px]">
        {tools.map((group, g) => (
          <React.Fragment key={g}>
            {g > 0 && <div className="mx-0.5 h-6 w-px shrink-0 bg-[#b5b9c4]" />}
            {group.map(({ label, art }) => (
              <button key={label} aria-label={label} title={label} className="flex w-7 shrink-0 justify-center">
                <svg width="24" height="24" viewBox="0 0 24 24" fill="none">{art}</svg>
              </button>
            ))}
          </React.Fragment>
        ))}
        <button className="ml-2 text-[16px] leading-5 font-bold">»</button>
      </div>
    </div>
  </div>
)

const snaps = [
  { label: 'End', checked: true },
  { label: 'Near' },
  { label: 'Point' },
  { label: 'Mid', checked: true },
  { label: 'Cen', checked: true },
  { label: 'Int' },
  { label: 'Perp' },
  { label: 'Tan' },
  { label: 'Quad' },
  { label: 'Knot', checked: true },
  { label: 'Vertex' },
  { label: 'Project', pushed: true },
  { label: 'Disable', pushed: true },
]

const OsnapBar = () => (
  <div className="flex h-9 shrink-0 items-start pt-1 pl-[3px] text-[11px]">
    <div className="h-7 w-[3px] border-x border-[#b5bac8]" />
    <div className="ml-[3px] grid h-[26px] grid-cols-[44px_48px_49px_42px_44px_37px_47px_44px_51px_47px_55px_58px_60px] items-center">
      {snaps.map((snap) => (
        <Check key={snap.label} {...snap} gap="gap-1" />
      ))}
    </div>
  </div>
)

const toggles = ['Grid Snap', 'Ortho', 'Planar', 'Osnap', 'SmartTrack', 'Gumball', 'Record History', 'Filter']

const StatusBar = () => (
  <footer className="grid h-5 shrink-0 grid-cols-[47px_72px_72px_72px_72px_1fr_63px_39px_45px_45px_70px_56px_88px_38px_6px_18px] border-t border-[#a7adbb] text-[12px] leading-5">
    <button className="border-r border-[#a7adbb]">CPlane</button>
    {['x 0.514', 'y 1.417', 'z 0.000', 'Meters'].map((text) => (
      <span key={text} className="border-r border-[#a7adbb] text-center whitespace-nowrap">{text}</span>
    ))}
    <button className="flex items-center gap-0.5 border-r border-[#a7adbb] pl-[3px]">
      <span className="size-[14px] border border-black bg-white" />0
    </button>
    {toggles.map((name) => {
      const on = name === 'Planar' || name === 'Osnap'
      return (
        <button
          key={name}
          aria-pressed={on}
          className={clsx('border-r border-[#a7adbb] whitespace-nowrap', on && 'bg-[#e4f1fb] font-bold')}
        >
          {name}
        </button>
      )
    })}
    <span className="border-r border-[#a7adbb]" />
  </footer>
)

export default function App() {
  return (
    <div
      className={clsx(
        'h-screen border-2 border-t-[#dcdcdc] border-r-[#7c7c7c] border-b-[#7c7c7c] border-l-[#dcdcdc] bg-[#b4b4b4] p-1 text-black',
        sans,
      )}
    >
      <div className="flex h-full flex-col overflow-hidden border-2 border-[#f6f6f6] bg-[#dfe2ea]">
        <TitleBar />
        <nav className={clsx('flex h-[21px] shrink-0 items-center gap-[13px] bg-[#f0f0f0] pl-[7px] text-[12px]', ui)}>
          {menus.map((name) => (
            <button key={name}>{name}</button>
          ))}
        </nav>
        <CommandArea />
        <Toolbars />
        <main className="flex min-h-0 flex-1">
          <Viewport />
          <div className="flex gap-1.5">
            <LayersPanel />
            <BoxEditPanel />
          </div>
        </main>
        <OsnapBar />
        <StatusBar />
      </div>
    </div>
  )
}
